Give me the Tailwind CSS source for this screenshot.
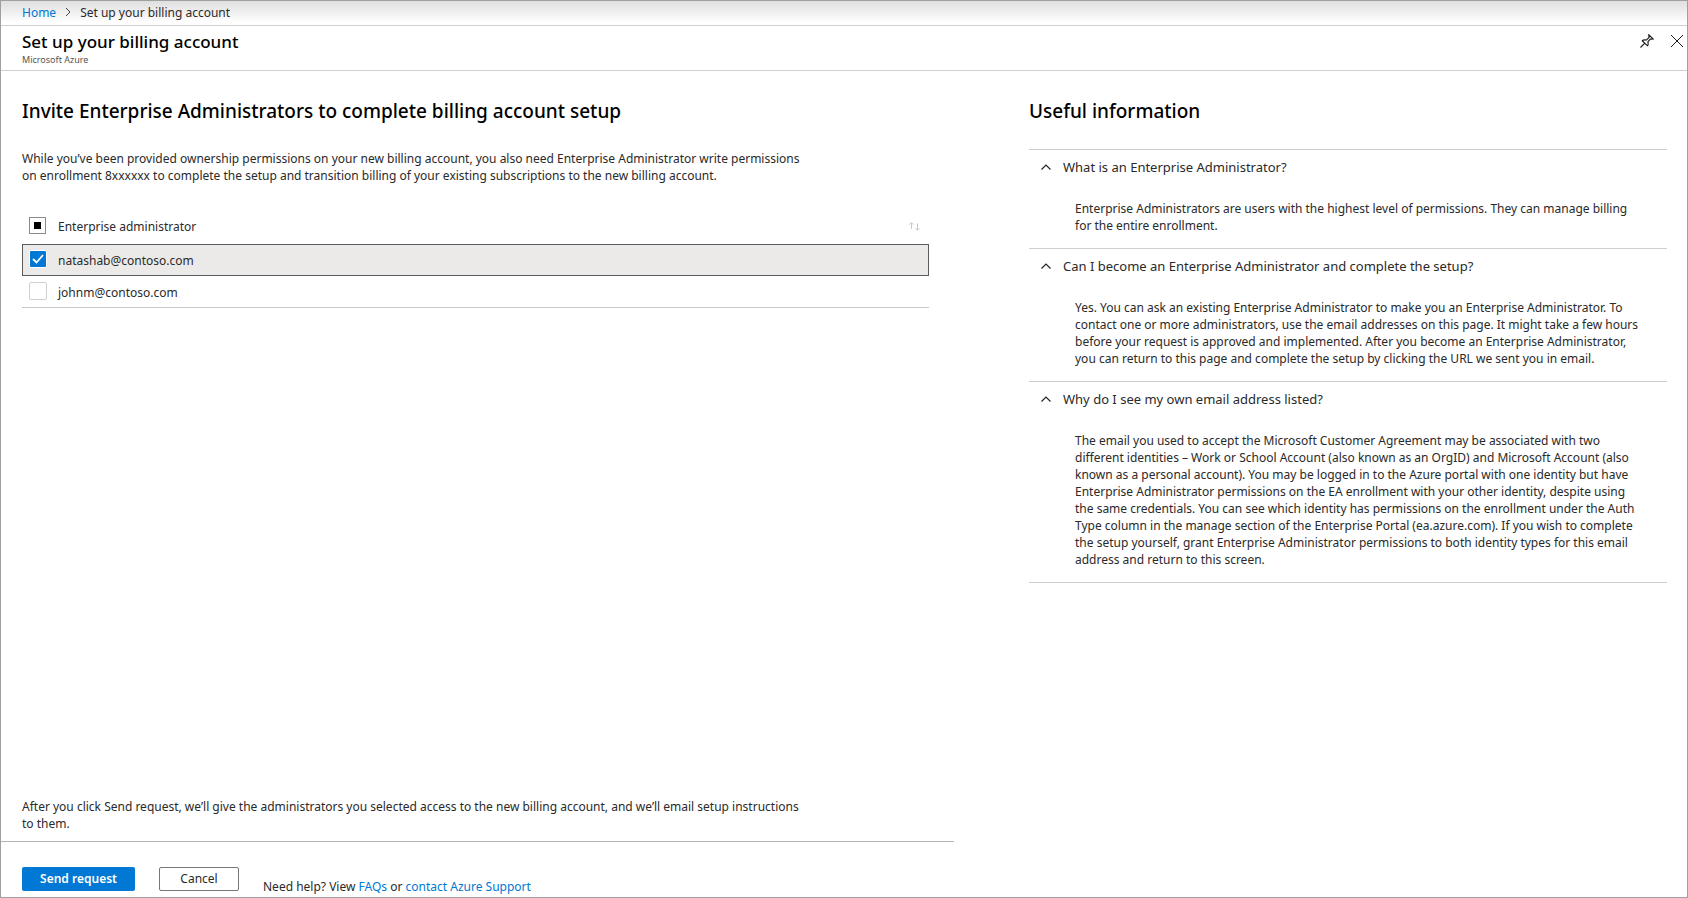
<!DOCTYPE html>
<html lang="en">
<head>
<meta charset="utf-8">
<meta name="viewport" content="width=device-width, initial-scale=1">
<title>Set up your billing account</title>
<script src="https://cdn.jsdelivr.net/npm/@tailwindcss/browser@4"></script>
</head>
<body class="flex min-h-screen flex-col border border-[#a0a0a0] bg-white font-['Noto_Sans','Open_Sans',sans-serif] text-[12px] leading-[17px] text-[#2a2a2a]">
  <nav aria-label="Breadcrumb" class="flex h-[25px] items-center border-b border-[#d0d0d0] bg-linear-to-b from-[#dfdfdf] to-white to-90% px-[21px] pb-0.5">
    <a href="#" class="text-[#0078d4]">Home</a>
    <svg class="mx-2 size-2" viewBox="0 0 8 8" fill="none" stroke="#444" aria-hidden="true"><path d="M2 0l4 4-4 4"/></svg>
    <span>Set up your billing account</span>
  </nav>
  <header class="flex h-[45px] justify-between border-b border-[#d0d0d0] pl-[21px] pr-[3px]">
    <div class="pt-1">
      <h1 class="text-[17px] font-medium leading-[24px] text-black">Set up your billing account</h1>
      <p class="text-[9px] leading-[12px] text-[#555]">Microsoft Azure</p>
    </div>
    <div class="flex items-start gap-4 pt-2">
      <button type="button" aria-label="Pin" class="size-[14px]">
        <svg viewBox="0 0 14 14" fill="none" stroke="#1b1b1b" stroke-width="1.1"><path d="M.5 13.500l4.300-4.300M2 6.500l5.800 5.600M2 6.700c1.600-1 3-1 4.200-.6L9 3.500 8.800.8l4.400 4.200-2.900.1-2.500 2.700c.5 1.400.6 2.700-.2 4.200"/></svg>
      </button>
      <button type="button" aria-label="Close" class="size-[14px]">
        <svg viewBox="0 0 14 14" fill="none" stroke="#1b1b1b"><path d="M1 1l12 12M13 1L1 13"/></svg>
      </button>
    </div>
  </header>
  <div class="grid grow grid-cols-[953fr_733fr]">
    <main class="flex flex-col">
      <section class="grow pl-[21px] pr-[25px] pt-[27px]">
        <h2 class="text-[19px] font-medium leading-[26px] text-black">Invite Enterprise Administrators to complete billing account setup</h2>
        <p class="mt-[26px]">While you’ve been provided ownership permissions on your new billing account, you also need Enterprise Administrator write permissions<br>on enrollment 8xxxxxx to complete the setup and transition billing of your existing subscriptions to the new billing account.</p>
        <table class="mt-[25px] w-full border-collapse text-left">
          <thead>
            <tr class="h-[35px]">
              <th class="w-9 pb-0.5 pl-[7px]">
                <span class="grid size-[17px] place-items-center">
                  <input type="checkbox" aria-label="Select all administrators" class="col-start-1 row-start-1 size-[17px] appearance-none border border-[#8a8a8a] bg-white">
                  <span class="pointer-events-none col-start-1 row-start-1 size-[7px] bg-black"></span>
                </span>
              </th>
              <th class="font-normal">
                <div class="flex items-center justify-between">
                  Enterprise administrator
                  <button type="button" aria-label="Sort" class="mr-[9px]">
                    <svg width="11" height="9" viewBox="0 0 11 9" fill="none" stroke="#c8c8c8"><path d="M2.500 7V.8M.5 2.700l2-2 2 2M8.500 1.500v6.700M6.500 6.300l2 2 2-2"/></svg>
                  </button>
                </div>
              </th>
            </tr>
          </thead>
          <tbody>
            <tr class="h-8 bg-[#ebeae8] outline outline-[#5c5c5c] -outline-offset-1">
              <td class="pb-0.5 pl-[7px]">
                <span class="grid size-[18px] place-items-center">
                  <input id="natasha" type="checkbox" checked class="col-start-1 row-start-1 size-[18px] appearance-none rounded-xs border border-white bg-[#0078d4]">
                  <svg class="pointer-events-none col-start-1 row-start-1 size-3" viewBox="0 0 12 12" fill="none" stroke="#fff" stroke-width="1.800"><path d="M1 6l3.500 3.500L11 2"/></svg>
                </span>
              </td>
              <td><label for="natasha">natashab@contoso.com</label></td>
            </tr>
            <tr class="h-[31px] border-b border-[#c8c8c8]">
              <td class="pl-[7px]">
                <input id="john" type="checkbox" class="block size-[18px] appearance-none rounded-xs border border-[#d0d0d0] bg-white">
              </td>
              <td class="pt-0.5"><label for="john">johnm@contoso.com</label></td>
            </tr>
          </tbody>
        </table>
      </section>
      <p class="pb-[9px] pl-[21px]">After you click Send request, we’ll give the administrators you selected access to the new billing account, and we’ll email setup instructions<br>to them.</p>
      <footer class="flex h-14 items-start border-t border-[#b4b4b4] pl-[21px] pt-[25px]">
        <button type="button" class="h-6 w-[113px] rounded-xs bg-[#0078d4] pb-0.5 font-semibold text-white">Send request</button>
        <button type="button" class="ml-6 h-6 w-20 rounded-xs border border-[#777] pb-0.5">Cancel</button>
        <p class="ml-6 pt-[11px]">Need help? View <a href="#" class="text-[#0078d4]">FAQs</a> or <a href="#" class="text-[#0078d4]">contact Azure Support</a></p>
      </footer>
    </main>
    <aside class="pl-[75px] pr-5 pt-[27px]">
      <h2 class="text-[19px] font-medium leading-[26px] text-black">Useful information</h2>
      <div class="mt-[25px] border-b border-[#cfcfcf]">
        <details open class="border-t border-[#cfcfcf] pb-[14px]">
          <summary class="flex h-[34px] cursor-pointer items-center gap-3 pl-3 text-[13px]">
            <svg class="h-[7px] w-[10px]" viewBox="0 0 10 7" fill="none" stroke="#222" stroke-width="1.200" aria-hidden="true"><path d="M.5 5.500L5 1l4.500 4.500"/></svg>
            What is an Enterprise Administrator?
          </summary>
          <p class="pl-[46px] pr-4 pt-4">Enterprise Administrators are users with the highest level of permissions. They can manage billing<br>for the entire enrollment.</p>
        </details>
        <details open class="border-t border-[#cfcfcf] pb-[14px]">
          <summary class="flex h-[34px] cursor-pointer items-center gap-3 pl-3 text-[13px]">
            <svg class="h-[7px] w-[10px]" viewBox="0 0 10 7" fill="none" stroke="#222" stroke-width="1.200" aria-hidden="true"><path d="M.5 5.500L5 1l4.500 4.500"/></svg>
            Can I become an Enterprise Administrator and complete the setup?
          </summary>
          <p class="pl-[46px] pr-4 pt-4">Yes. You can ask an existing Enterprise Administrator to make you an Enterprise Administrator. To<br>contact one or more administrators, use the email addresses on this page. It might take a few hours<br>before your request is approved and implemented. After you become an Enterprise Administrator,<br>you can return to this page and complete the setup by clicking the URL we sent you in email.</p>
        </details>
        <details open class="border-t border-[#cfcfcf] pb-[14px]">
          <summary class="flex h-[34px] cursor-pointer items-center gap-3 pl-3 text-[13px]">
            <svg class="h-[7px] w-[10px]" viewBox="0 0 10 7" fill="none" stroke="#222" stroke-width="1.200" aria-hidden="true"><path d="M.5 5.500L5 1l4.500 4.500"/></svg>
            Why do I see my own email address listed?
          </summary>
          <p class="pl-[46px] pr-4 pt-4">The email you used to accept the Microsoft Customer Agreement may be associated with two<br>different identities – Work or School Account (also known as an OrgID) and Microsoft Account (also<br>known as a personal account). You may be logged in to the Azure portal with one identity but have<br>Enterprise Administrator permissions on the EA enrollment with your other identity, despite using<br>the same credentials. You can see which identity has permissions on the enrollment under the Auth<br>Type column in the manage section of the Enterprise Portal (ea.azure.com). If you wish to complete<br>the setup yourself, grant Enterprise Administrator permissions to both identity types for this email<br>address and return to this screen.</p>
        </details>
      </div>
    </aside>
  </div>
</body>
</html>
